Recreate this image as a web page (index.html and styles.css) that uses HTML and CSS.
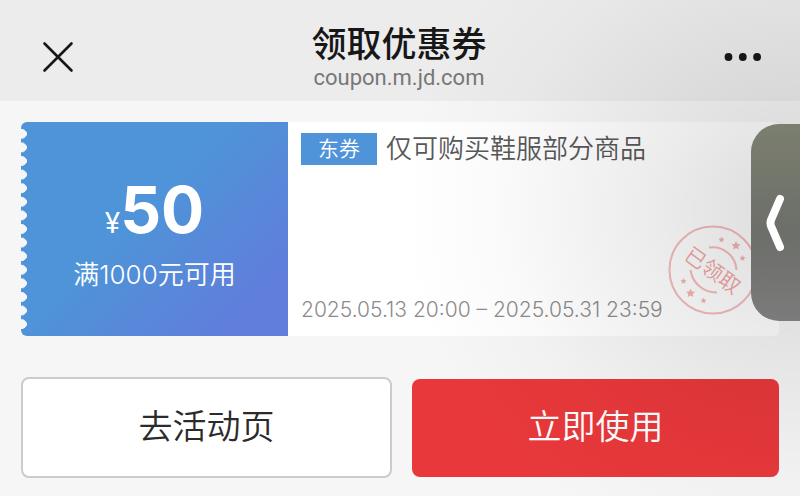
FILE: index.html
```html
<!DOCTYPE html>
<html lang="zh-CN">
<head>
  <meta charset="UTF-8">
  <meta name="viewport" content="width=device-width, initial-scale=1.0">
  <title>领取优惠券</title>
  <link rel="stylesheet" href="styles.css">
</head>
<body>
  <header class="topbar">
    <button class="icon-btn" aria-label="关闭">
      <svg width="32" height="32" viewBox="0 0 32 32"><path d="M2.500 2.500 L29.500 29.500 M29.500 2.500 L2.500 29.500" stroke="#171717" stroke-width="2.600" stroke-linecap="round"/></svg>
    </button>
    <div class="title">
      <h1>领取优惠券</h1>
      <p>coupon.m.jd.com</p>
    </div>
    <button class="icon-btn" aria-label="更多">
      <svg width="38" height="10" viewBox="0 0 38 10" fill="#171717"><circle cx="4.500" cy="5" r="3.900"/><circle cx="18.800" cy="5" r="3.900"/><circle cx="33.100" cy="5" r="3.900"/></svg>
    </button>
  </header>

  <main>
    <section class="coupon">
      <div class="amount">
        <p class="price"><span>¥</span><strong>50</strong></p>
        <p class="limit">满1000元可用</p>
      </div>
      <div class="info">
        <h2><span class="tag">东券</span>仅可购买鞋服部分商品</h2>
        <p class="date">2025.05.13 20:00 – 2025.05.31 23:59</p>
        <svg class="stamp" width="90" height="90" viewBox="0 0 90 90">
          <g fill="none" stroke="#f6bcbc" stroke-width="2">
            <circle cx="45" cy="45" r="43.500"/>
            <path d="M41 22.500 A24 24 0 0 1 68.500 45"/>
            <path d="M22.500 45 A26 26 0 0 0 49 67.500"/>
          </g>
          <g fill="#f6b5b5">
            <path id="star" d="M0 -4.500 L1.400 -1.600 L4.500 -1.300 L2.200 .9 L2.800 4 L0 2.400 L-2.800 4 L-2.200 .9 L-4.500 -1.300 L-1.400 -1.600 Z" transform="translate(68 20.500)"/>
            <use href="#star" transform="translate(-45.500 47.500)"/>
            <path id="small" d="M0 -3 L1 -1 L3 -.8 L1.500 .7 L1.900 2.800 L0 1.800 L-1.900 2.800 L-1.500 .7 L-3 -.8 L-1 -1 Z" transform="translate(53.500 14.500)"/>
            <use href="#small" transform="translate(21 18.500)"/>
            <use href="#small" transform="translate(-38 41.500)"/>
            <use href="#small" transform="translate(-18 61)"/>
          </g>
          <text x="45" y="53" text-anchor="middle" transform="rotate(36 45 45)">已领取</text>
        </svg>
      </div>
    </section>

    <div class="actions">
      <button class="btn">去活动页</button>
      <button class="btn btn-red">立即使用</button>
    </div>
  </main>

  <div class="shade"></div>
  <button class="side-tab" aria-label="展开">
    <svg width="22" height="58" viewBox="0 0 22 58"><path d="M15 5 L6 26 Q5 29 6 32 L15 53" fill="none" stroke="#fff" stroke-width="8" stroke-linecap="round" stroke-linejoin="round"/></svg>
  </button>
</body>
</html>
```
FILE: styles.css
```css
* { box-sizing: border-box; }
body { font-family: Inter, "Noto Sans CJK SC", sans-serif; margin: 0; min-height: 100vh; background: #f6f6f6; position: relative; overflow-x: hidden; }
h1, h2, p { margin: 0; font-weight: 400; }
button { font-family: inherit; padding: 0; border: 0; background: none; cursor: pointer; }
svg { display: block; }

.topbar { display: flex; justify-content: space-between; align-items: center; padding: 23px 38px 11px 42px; background: #ececec; }
.title { text-align: center; color: #171717; }
.title h1 { font-size: 35px; line-height: 43px; font-weight: 500; }
.title p { font-family: Roboto, sans-serif; font-size: 22px; line-height: 24px; color: #777; }

main { padding: 21px; }
.coupon { display: flex; min-height: 214px; background: #fff; border-radius: 6px; }
.amount { position: relative; width: 267px; flex: none; padding-top: 52px; text-align: center; color: #fff; border-radius: 6px 0 0 6px; background: linear-gradient(135deg, #4f93d8 45%, #607edb 85%); }
/* torn edge */
.amount::before { content: ""; position: absolute; left: 0; top: 5px; bottom: 5px; width: 6px; background: radial-gradient(ellipse 6px 5px at 0 50%, #f6f6f6 95%, transparent) 0 0 / 6px 14px round; }
.price { display: flex; justify-content: center; align-items: baseline; line-height: 72px; }
.price span { font-size: 28px; line-height: 28px; }
.price strong { font-size: 64px; font-weight: 700; }
.limit { font-size: 26px; line-height: 58px; font-weight: 350; }
.info { position: relative; flex: 1; display: flex; flex-direction: column; justify-content: space-between; padding: 10px 13px 12px; }
.info h2 { display: flex; align-items: center; gap: 9px; font-size: 26px; line-height: 34px; font-weight: 350; color: #585858; }
.tag { padding: 0 17px; font-size: 21px; line-height: 32px; color: #fff; background: #4f93d8; }
.date { font-size: 21px; line-height: 28px; font-weight: 300; color: #8c8c8c; }
.stamp { position: absolute; right: 21px; bottom: 21px; }
.stamp text { font-size: 21px; font-weight: 350; fill: #f2a6a6; }

.actions { display: flex; align-items: center; gap: 20px; margin-top: 41px; }
.btn { flex: 1; height: 101px; padding-bottom: 6px; font-size: 34px; font-weight: 350; color: #2b2b2b; background: #fff; border: 2px solid #ccc; border-radius: 8px; }
.btn-red { height: 98px; color: #fff; background: #e8383b; border: 0; }

/* shadow spreading from the side tab */
.shade { position: absolute; inset: 0; pointer-events: none; background: radial-gradient(ellipse 400px 360px at 100% 42%, rgba(0, 0, 0, .14), rgba(0, 0, 0, .08) 35%, rgba(0, 0, 0, .02) 75%, transparent); }
.side-tab { position: absolute; right: 0; top: 124px; width: 49px; height: 197px; padding-left: 14px; border-radius: 28px 0 0 28px; background: linear-gradient(#7b7f6e, #6c6e69 55%, #7b7b7b); }
```
